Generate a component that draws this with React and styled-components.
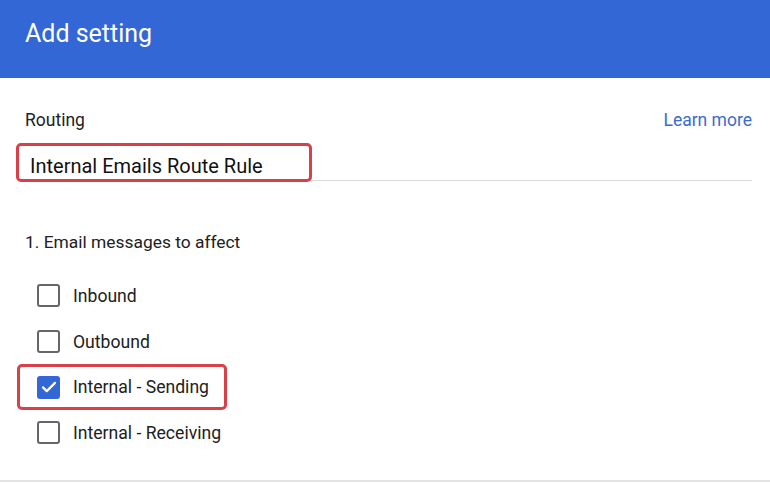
import React from "react";
import styled, { createGlobalStyle } from "styled-components";

const GlobalStyle = createGlobalStyle`
  html, body {
    margin: 0;
    padding: 0;
    background: #fff;
  }
  body {
    font-family: Roboto, "Liberation Sans", Arial, sans-serif;
    color: #212121;
  }
`;

const Page = styled.div`
  width: 770px;
  height: 483px;
  display: flex;
  flex-direction: column;
  padding-bottom: 1px;
  box-sizing: border-box;
  overflow: hidden;
`;

const Header = styled.header`
  height: 78px;
  flex-shrink: 0;
  box-sizing: border-box;
  padding: 18px 25px 0;
  background: #3367d6;
  color: #fff;
  font-size: 25px;
  line-height: 32px;
`;

const Body = styled.main`
  flex: 1;
  padding: 32px 18px 0 25px;
  border-bottom: 2px solid #e3e3e3;
`;

const TopRow = styled.div`
  display: flex;
  justify-content: space-between;
  align-items: baseline;
  font-size: 17.5px;
  line-height: 20px;
`;

const LearnMore = styled.a`
  color: #3c6bcf;
  text-decoration: none;
`;

const Field = styled.div`
  display: flex;
  margin-top: 13px;
  border-bottom: 1px solid #dcdcdc;
`;

const Highlight = styled.div`
  box-sizing: border-box;
  margin: 0 0 -2px -9px;
  padding: 8px 11px 1px;
  width: 296px;
  height: 39px;
  border: 3px solid #d9414a;
  border-radius: 5px;
  font-size: 20px;
  line-height: 24px;
  color: #111;
  white-space: nowrap;
`;

const SectionTitle = styled.div`
  margin-top: 51px;
  font-size: 17.4px;
  line-height: 20px;
`;

const List = styled.div`
  display: flex;
  flex-direction: column;
  margin-top: 21px;
`;

const Row = styled.label`
  box-sizing: border-box;
  display: flex;
  align-items: center;
  gap: 13px;
  width: fit-content;
  height: 45.7px;
  margin-left: -8px;
  padding: 0 15px 0 17px;
  border: 3px solid ${(p) => (p.$highlighted ? "#d9414a" : "transparent")};
  border-radius: 5px;
  font-size: 17.6px;
  color: #212121;
`;

const Box = styled.span`
  box-sizing: border-box;
  width: 23px;
  height: 23px;
  border-radius: 3px;
  border: 2px solid ${(p) => (p.$checked ? "#3367d6" : "#666")};
  background: ${(p) => (p.$checked ? "#3367d6" : "#fff")};
  display: flex;
  align-items: center;
  justify-content: center;
`;

const Check = () => (
  <svg width="18" height="18" viewBox="0 0 24 24" fill="none">
    <path
      d="M4 12.5l5 5L20 6.5"
      stroke="#fff"
      strokeWidth="3"
      strokeLinecap="round"
      strokeLinejoin="round"
    />
  </svg>
);

const options = [
  { label: "Inbound", checked: false },
  { label: "Outbound", checked: false },
  { label: "Internal - Sending", checked: true },
  { label: "Internal - Receiving", checked: false },
];

const App = () => {
  return (
    <Page>
      <GlobalStyle />
      <Header>Add setting</Header>
      <Body>
        <TopRow>
          <span>Routing</span>
          <LearnMore href="#">Learn more</LearnMore>
        </TopRow>
        <Field>
          <Highlight>Internal Emails Route Rule</Highlight>
        </Field>
        <SectionTitle>1. Email messages to affect</SectionTitle>
        <List>
          {options.map((o) => (
            <Row key={o.label} $highlighted={o.checked}>
              <Box $checked={o.checked}>{o.checked && <Check />}</Box>
              {o.label}
            </Row>
          ))}
        </List>
      </Body>
    </Page>
  );
};

export default App;
